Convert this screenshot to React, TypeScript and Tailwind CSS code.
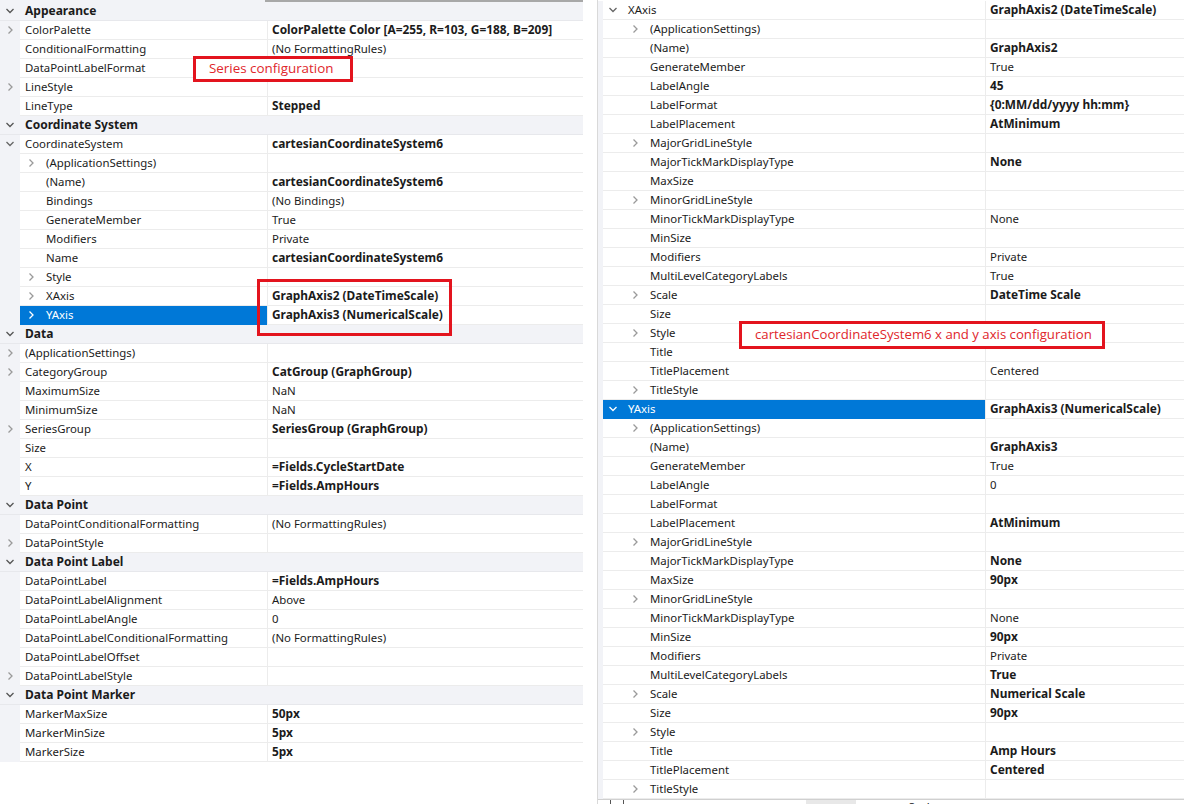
import React from 'react';

type Row =
  | { h: string }
  | { l: string; v?: string; b?: boolean; lv: number; e?: 'r' | 'd'; sel?: boolean };

const leftRows: Row[] = [
  { h: 'Appearance' },
  { l: 'ColorPalette', v: 'ColorPalette Color [A=255, R=103, G=188, B=209]', b: true, lv: 0, e: 'r' },
  { l: 'ConditionalFormatting', v: '(No FormattingRules)', lv: 0 },
  { l: 'DataPointLabelFormat', lv: 0 },
  { l: 'LineStyle', lv: 0, e: 'r' },
  { l: 'LineType', v: 'Stepped', b: true, lv: 0 },
  { h: 'Coordinate System' },
  { l: 'CoordinateSystem', v: 'cartesianCoordinateSystem6', b: true, lv: 0, e: 'd' },
  { l: '(ApplicationSettings)', lv: 1, e: 'r' },
  { l: '(Name)', v: 'cartesianCoordinateSystem6', b: true, lv: 1 },
  { l: 'Bindings', v: '(No Bindings)', lv: 1 },
  { l: 'GenerateMember', v: 'True', lv: 1 },
  { l: 'Modifiers', v: 'Private', lv: 1 },
  { l: 'Name', v: 'cartesianCoordinateSystem6', b: true, lv: 1 },
  { l: 'Style', lv: 1, e: 'r' },
  { l: 'XAxis', v: 'GraphAxis2 (DateTimeScale)', b: true, lv: 1, e: 'r' },
  { l: 'YAxis', v: 'GraphAxis3 (NumericalScale)', b: true, lv: 1, e: 'r', sel: true },
  { h: 'Data' },
  { l: '(ApplicationSettings)', lv: 0, e: 'r' },
  { l: 'CategoryGroup', v: 'CatGroup (GraphGroup)', b: true, lv: 0, e: 'r' },
  { l: 'MaximumSize', v: 'NaN', lv: 0 },
  { l: 'MinimumSize', v: 'NaN', lv: 0 },
  { l: 'SeriesGroup', v: 'SeriesGroup (GraphGroup)', b: true, lv: 0, e: 'r' },
  { l: 'Size', lv: 0 },
  { l: 'X', v: '=Fields.CycleStartDate', b: true, lv: 0 },
  { l: 'Y', v: '=Fields.AmpHours', b: true, lv: 0 },
  { h: 'Data Point' },
  { l: 'DataPointConditionalFormatting', v: '(No FormattingRules)', lv: 0 },
  { l: 'DataPointStyle', lv: 0, e: 'r' },
  { h: 'Data Point Label' },
  { l: 'DataPointLabel', v: '=Fields.AmpHours', b: true, lv: 0 },
  { l: 'DataPointLabelAlignment', v: 'Above', lv: 0 },
  { l: 'DataPointLabelAngle', v: '0', lv: 0 },
  { l: 'DataPointLabelConditionalFormatting', v: '(No FormattingRules)', lv: 0 },
  { l: 'DataPointLabelOffset', lv: 0 },
  { l: 'DataPointLabelStyle', lv: 0, e: 'r' },
  { h: 'Data Point Marker' },
  { l: 'MarkerMaxSize', v: '50px', b: true, lv: 0 },
  { l: 'MarkerMinSize', v: '5px', b: true, lv: 0 },
  { l: 'MarkerSize', v: '5px', b: true, lv: 0 },
];

const rightRows: Row[] = [
  { l: 'XAxis', v: 'GraphAxis2 (DateTimeScale)', b: true, lv: 1, e: 'd' },
  { l: '(ApplicationSettings)', lv: 2, e: 'r' },
  { l: '(Name)', v: 'GraphAxis2', b: true, lv: 2 },
  { l: 'GenerateMember', v: 'True', lv: 2 },
  { l: 'LabelAngle', v: '45', b: true, lv: 2 },
  { l: 'LabelFormat', v: '{0:MM/dd/yyyy hh:mm}', b: true, lv: 2 },
  { l: 'LabelPlacement', v: 'AtMinimum', b: true, lv: 2 },
  { l: 'MajorGridLineStyle', lv: 2, e: 'r' },
  { l: 'MajorTickMarkDisplayType', v: 'None', b: true, lv: 2 },
  { l: 'MaxSize', lv: 2 },
  { l: 'MinorGridLineStyle', lv: 2, e: 'r' },
  { l: 'MinorTickMarkDisplayType', v: 'None', lv: 2 },
  { l: 'MinSize', lv: 2 },
  { l: 'Modifiers', v: 'Private', lv: 2 },
  { l: 'MultiLevelCategoryLabels', v: 'True', lv: 2 },
  { l: 'Scale', v: 'DateTime Scale', b: true, lv: 2, e: 'r' },
  { l: 'Size', lv: 2 },
  { l: 'Style', lv: 2, e: 'r' },
  { l: 'Title', lv: 2 },
  { l: 'TitlePlacement', v: 'Centered', lv: 2 },
  { l: 'TitleStyle', lv: 2, e: 'r' },
  { l: 'YAxis', v: 'GraphAxis3 (NumericalScale)', b: true, lv: 1, e: 'd', sel: true },
  { l: '(ApplicationSettings)', lv: 2, e: 'r' },
  { l: '(Name)', v: 'GraphAxis3', b: true, lv: 2 },
  { l: 'GenerateMember', v: 'True', lv: 2 },
  { l: 'LabelAngle', v: '0', lv: 2 },
  { l: 'LabelFormat', lv: 2 },
  { l: 'LabelPlacement', v: 'AtMinimum', b: true, lv: 2 },
  { l: 'MajorGridLineStyle', lv: 2, e: 'r' },
  { l: 'MajorTickMarkDisplayType', v: 'None', b: true, lv: 2 },
  { l: 'MaxSize', v: '90px', b: true, lv: 2 },
  { l: 'MinorGridLineStyle', lv: 2, e: 'r' },
  { l: 'MinorTickMarkDisplayType', v: 'None', lv: 2 },
  { l: 'MinSize', v: '90px', b: true, lv: 2 },
  { l: 'Modifiers', v: 'Private', lv: 2 },
  { l: 'MultiLevelCategoryLabels', v: 'True', b: true, lv: 2 },
  { l: 'Scale', v: 'Numerical Scale', b: true, lv: 2, e: 'r' },
  { l: 'Size', v: '90px', b: true, lv: 2 },
  { l: 'Style', lv: 2, e: 'r' },
  { l: 'Title', v: 'Amp Hours', b: true, lv: 2 },
  { l: 'TitlePlacement', v: 'Centered', b: true, lv: 2 },
  { l: 'TitleStyle', lv: 2, e: 'r' },
];

function Chevron({ dir, color }: { dir: 'r' | 'd'; color: string }) {
  return dir === 'r' ? (
    <svg width="8" height="10" viewBox="0 0 8 10">
      <path d="M2.5 1.5 L6 5 L2.5 8.5" fill="none" stroke={color} strokeWidth="1.3" />
    </svg>
  ) : (
    <svg width="10" height="8" viewBox="0 0 10 8">
      <path d="M1.5 2 L5 5.5 L8.5 2" fill="none" stroke={color} strokeWidth="1.3" />
    </svg>
  );
}

function Line({ r, side }: { r: Row; side: 'L' | 'R' }) {
  const L = side === 'L';
  if ('h' in r) {
    return (
      <div className="flex h-[19px] items-center border-b border-[#e7e8ec] bg-[#f2f3f7]">
        <div className="flex w-[20px] justify-center">
          <Chevron dir="d" color="#555555" />
        </div>
        <span className="pl-[5px] text-[12px] font-bold">{r.h}</span>
      </div>
    );
  }
  const chevColor = r.sel ? '#ffffff' : r.e === 'd' ? '#666666' : '#9a9a9a';
  const showBox = !(L && r.lv === 0);
  let indent = '';
  if (L && r.lv === 1) indent = 'pl-[1px]';
  if (!L && r.lv === 2) indent = 'pl-[22px]';
  return (
    <div className="flex h-[19px]">
      <div
        className={
          L
            ? 'flex w-[20px] shrink-0 items-center justify-center border-b border-[#f2f3f7] bg-[#f2f3f7]'
            : 'w-[5px] shrink-0 bg-[#f2f3f7]'
        }
      >
        {L && r.lv === 0 && r.e && <Chevron dir={r.e} color={chevColor} />}
      </div>
      <div
        className={`flex shrink-0 items-center border-b ${L ? 'w-[247px]' : 'w-[382px]'} ${
          r.sel ? 'border-[#0078d7] bg-[#0078d7] text-white' : 'border-[#ececec] bg-white'
        } ${indent}`}
      >
        {showBox && (
          <div className="flex w-[20px] shrink-0 justify-center">
            {r.e && <Chevron dir={r.e} color={chevColor} />}
          </div>
        )}
        <span className="ml-[5px] whitespace-nowrap">{r.l}</span>
      </div>
      <div className="flex min-w-0 flex-1 items-center border-b border-l border-[#ececec] bg-white pl-[4px]">
        {r.v && (
          <span className={`whitespace-nowrap ${r.b ? 'text-[11.9px] font-bold' : ''}`}>{r.v}</span>
        )}
      </div>
    </div>
  );
}

export default function App() {
  return (
    <div className="relative h-[804px] w-[1184px] overflow-hidden bg-white font-['Noto_Sans','Segoe_UI',sans-serif] text-[11.4px] leading-none text-[#1b1b1b]">
      <div className="flex">
        <div className="w-[583px] shrink-0">
          <div className="flex h-[2px]">
            <div className="w-[265px] bg-[#f2f3f7]" />
            <div className="flex-1 bg-[#a8a8a8]" />
          </div>
          {leftRows.map((r, i) => (
            <Line key={i} r={r} side="L" />
          ))}
        </div>
        <div className="w-[14px] shrink-0" />
        <div className="flex-1 border-l border-[#d9d9d9] pt-[1px]">
          {rightRows.map((r, i) => (
            <Line key={i} r={r} side="R" />
          ))}
          <div className="flex h-[6px] items-start overflow-hidden border-t border-[#d0d0d0]">
            <div className="ml-[12px] h-[6px] w-[1px] bg-[#555]" />
            <div className="ml-[12px] h-[6px] w-[1px] bg-[#555]" />
            <div className="ml-[182px] h-[6px] w-[50px] bg-[#e8e8e8]" />
            <div className="ml-[40px] pt-[1px] text-[#9a9a9a]">&gt;</div>
            <div className="ml-[6px] pt-[1px]">Scale</div>
          </div>
        </div>
      </div>

      <div className="absolute left-[193px] top-[56px] flex h-[26px] w-[160px] items-center border-[3px] border-[#e3141e] bg-white pl-[13px] font-['Open_Sans',sans-serif] text-[13.4px] text-[#e0262b]">
        Series configuration
      </div>
      <div className="absolute left-[257px] top-[279px] h-[57px] w-[195px] border-[3px] border-[#e3141e]" />
      <div className="absolute left-[739px] top-[321px] flex h-[28px] w-[366px] items-center border-[3px] border-[#e3141e] bg-white pl-[13px] font-['Open_Sans',sans-serif] text-[13.2px] text-[#e0262b]">
        cartesianCoordinateSystem6 x and y axis configuration
      </div>
    </div>
  );
}
